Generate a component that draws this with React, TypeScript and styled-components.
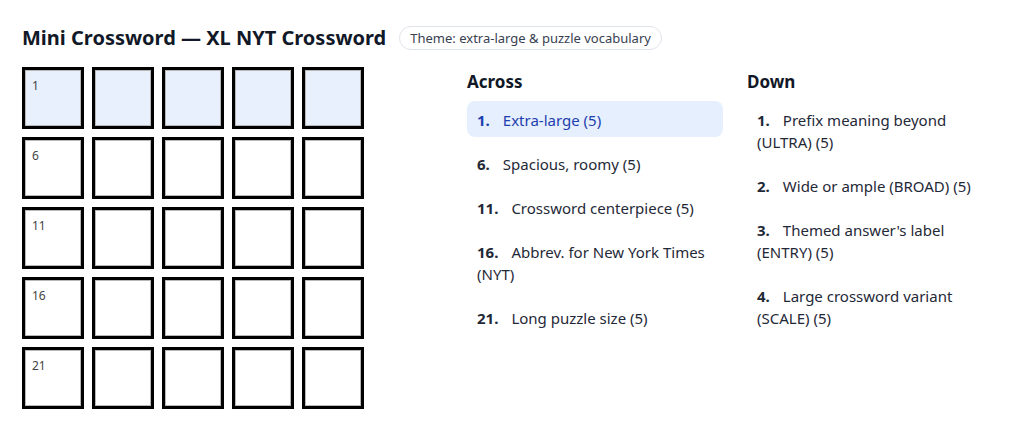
import React from "react";
import styled, { createGlobalStyle } from "styled-components";

const Global = createGlobalStyle`
  html, body { margin: 0; padding: 0; background: #fff; }
  body { font-family: "Noto Sans", "Open Sans", sans-serif; color: #1f2937; }
`;

const Page = styled.div`
  padding: 19px 22px;
`;

const Header = styled.div`
  display: flex;
  align-items: center;
  gap: 13px;
  height: 38px;
`;

const Title = styled.h1`
  margin: 0 0 2px;
  font-size: 20px;
  font-weight: 700;
  color: #111827;
`;

const Badge = styled.span`
  display: inline-flex;
  align-items: center;
  height: 22px;
  padding: 0 10px;
  border: 1px solid #dfe3ea;
  border-radius: 12px;
  font-size: 13px;
  color: #374151;
`;

const Main = styled.div`
  display: flex;
  align-items: flex-start;
  margin-top: 10px;
`;

const Grid = styled.div`
  display: grid;
  grid-template-columns: repeat(5, 62px);
  grid-auto-rows: 62px;
  gap: 8px;
  margin-right: 103px;
`;

const Cell = styled.div<{ $active?: boolean }>`
  position: relative;
  box-sizing: border-box;
  border: 3px solid #000;
  box-shadow: inset 0 0 0 1px #b8b8b8;
  background: ${(p) => (p.$active ? "#e8effd" : "#fff")};
`;

const CellNum = styled.span`
  position: absolute;
  top: 9px;
  left: 7px;
  font-size: 12px;
  color: #444;
  line-height: 14px;
`;

const Clues = styled.div`
  display: flex;
  gap: 24px;
`;

const Column = styled.div`
  width: 256px;
`;

const Heading = styled.h2`
  margin: 0 0 8px;
  font-size: 17px;
  font-weight: 700;
  color: #111827;
  line-height: 22px;
  padding-top: 4px;
`;

const List = styled.ol`
  list-style: none;
  margin: 0;
  padding: 0;
  display: flex;
  flex-direction: column;
  gap: 8px;
`;

const Item = styled.li<{ $active?: boolean }>`
  padding: 8px 10px 6px;
  border-radius: 8px;
  font-size: 15px;
  line-height: 22px;
  background: ${(p) => (p.$active ? "#e6effd" : "transparent")};
  color: ${(p) => (p.$active ? "#1e40af" : "#1f2937")};
`;

const Num = styled.span`
  font-weight: 700;
  margin-right: 13px;
`;

const across = [
  { n: 1, t: "Extra-large (5)", active: true },
  { n: 6, t: "Spacious, roomy (5)" },
  { n: 11, t: "Crossword centerpiece (5)" },
  { n: 16, t: "Abbrev. for New York Times (NYT)" },
  { n: 21, t: "Long puzzle size (5)" },
];

const down = [
  { n: 1, t: "Prefix meaning beyond (ULTRA) (5)" },
  { n: 2, t: "Wide or ample (BROAD) (5)" },
  { n: 3, t: "Themed answer's label (ENTRY) (5)" },
  { n: 4, t: "Large crossword variant (SCALE) (5)" },
];

const rowNums = [1, 6, 11, 16, 21];

export default function App() {
  return (
    <Page>
      <Global />
      <Header>
        <Title>Mini Crossword — XL NYT Crossword</Title>
        <Badge>Theme: extra-large &amp; puzzle vocabulary</Badge>
      </Header>
      <Main>
        <Grid>
          {rowNums.map((rn, r) =>
            [0, 1, 2, 3, 4].map((c) => (
              <Cell key={`${r}-${c}`} $active={r === 0}>
                {c === 0 && <CellNum>{rn}</CellNum>}
              </Cell>
            ))
          )}
        </Grid>
        <Clues>
          <Column>
            <Heading>Across</Heading>
            <List>
              {across.map((a) => (
                <Item key={a.n} $active={a.active}>
                  <Num>{a.n}.</Num>
                  {a.t}
                </Item>
              ))}
            </List>
          </Column>
          <Column>
            <Heading>Down</Heading>
            <List>
              {down.map((a) => (
                <Item key={a.n}>
                  <Num>{a.n}.</Num>
                  {a.t}
                </Item>
              ))}
            </List>
          </Column>
        </Clues>
      </Main>
    </Page>
  );
}
